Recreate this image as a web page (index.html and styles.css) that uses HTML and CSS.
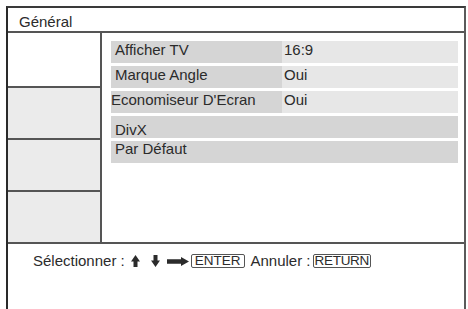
FILE: index.html
```html
<!DOCTYPE html>
<html lang="fr">
<head>
<meta charset="utf-8">
<title>Général</title>
<link rel="stylesheet" href="styles.css">
</head>
<body>
<div class="frame">
  <div class="header">Général</div>
  <div class="main">
    <div class="side">
      <div class="cell cell-white"></div>
      <div class="cell"></div>
      <div class="cell"></div>
      <div class="cell cell-last"></div>
    </div>
    <div class="content">
      <div class="row">
        <div class="label">Afficher TV</div>
        <div class="value">16:9</div>
      </div>
      <div class="row">
        <div class="label">Marque Angle</div>
        <div class="value">Oui</div>
      </div>
      <div class="row">
        <div class="label label-tight">Economiseur D'Ecran</div>
        <div class="value">Oui</div>
      </div>
      <div class="row row-full row-low">
        <div class="label">DivX</div>
      </div>
      <div class="row row-full row-high">
        <div class="label">Par Défaut</div>
      </div>
    </div>
  </div>
  <div class="footer">
    <span class="ftext">Sélectionner :</span>
    <svg class="icon up" width="9" height="12" viewBox="0 0 9 12"><path d="M4.5 0 L9 6.5 L6.5 6.5 L6.5 12 L2.5 12 L2.5 6.5 L0 6.5 Z" fill="#2b2b2b"/></svg>
    <svg class="icon down" width="9" height="12" viewBox="0 0 9 12"><path d="M2.5 0 H6.5 V5.5 H9 L4.5 12 L0 5.5 H2.5 Z" fill="#2b2b2b"/></svg>
    <svg class="icon right" width="22" height="9" viewBox="0 0 22 9"><path d="M0 2.3 H14 V0 L22 4.5 L14 9 V6.7 H0 Z" fill="#2b2b2b"/></svg>
    <span class="key key-enter">ENTER</span>
    <span class="ftext annuler">Annuler :</span>
    <span class="key key-return">RETURN</span>
  </div>
</div>
</body>
</html>
```
FILE: styles.css
```css
html, body {
  margin: 0;
  padding: 0;
  background: #ffffff;
  overflow: hidden;
}
body {
  font-family: "Liberation Sans", Arial, sans-serif;
  color: #2b2b2b;
  width: 468px;
  height: 309px;
}
.frame {
  margin-left: 6px;
  margin-top: 6px;
  width: 456px;
  height: 301px;
  border-left: 2px solid #2a2a2a;
  border-top: 2px solid #3a3a3a;
  border-right: 2px solid #5a5a5a;
}
.header {
  height: 25px;
  box-sizing: border-box;
  padding-left: 11px;
  padding-top: 5px;
  font-size: 15px;
  line-height: 18px;
  border-bottom: 2px solid #555555;
}
.main {
  display: flex;
  height: 209px;
  border-bottom: 2px solid #555555;
}
.side {
  width: 92px;
  border-right: 2px solid #555555;
  display: flex;
  flex-direction: column;
}
.cell {
  height: 50px;
  background: #ebebeb;
  border-bottom: 2px solid #555555;
}
.cell-white {
  height: 53px;
  background: #ffffff;
}
.cell-last {
  border-bottom: none;
  flex: 1;
}
.content {
  flex: 1;
  padding: 8px 6px 0 9px;
  display: flex;
  flex-direction: column;
  gap: 3px;
}
.row {
  display: flex;
  height: 22px;
  font-size: 15px;
  line-height: 18px;
}
.label {
  width: 171px;
  box-sizing: border-box;
  padding-left: 4px;
  background: #d5d5d5;
  white-space: nowrap;
}
.label-tight {
  padding-left: 0;
}
.value {
  flex: 1;
  padding-left: 2px;
  background: #e7e7e7;
}
.row-full {
  background: #d5d5d5;
}
.row-full .label {
  width: auto;
  flex: 1;
}
.row-low .label {
  padding-top: 5px;
}
.row-high .label {
  line-height: 16px;
}
.footer {
  display: flex;
  align-items: center;
  padding-left: 25px;
  padding-top: 8px;
  height: 18px;
  font-size: 15px;
  line-height: 18px;
}
.ftext {
  white-space: nowrap;
}
.icon {
  display: block;
}
.up {
  margin-left: 6px;
}
.down {
  margin-left: 11px;
}
.right {
  margin-left: 7px;
}
.key {
  display: block;
  border: 1.5px solid #555555;
  border-radius: 2px;
  font-size: 13.5px;
  line-height: 12px;
  height: 12px;
}
.key-enter {
  margin-left: 2px;
  padding: 0 3px;
}
.annuler {
  margin-left: 6px;
}
.key-return {
  margin-left: 2px;
  padding: 0 1px;
  letter-spacing: -0.3px;
}
```
